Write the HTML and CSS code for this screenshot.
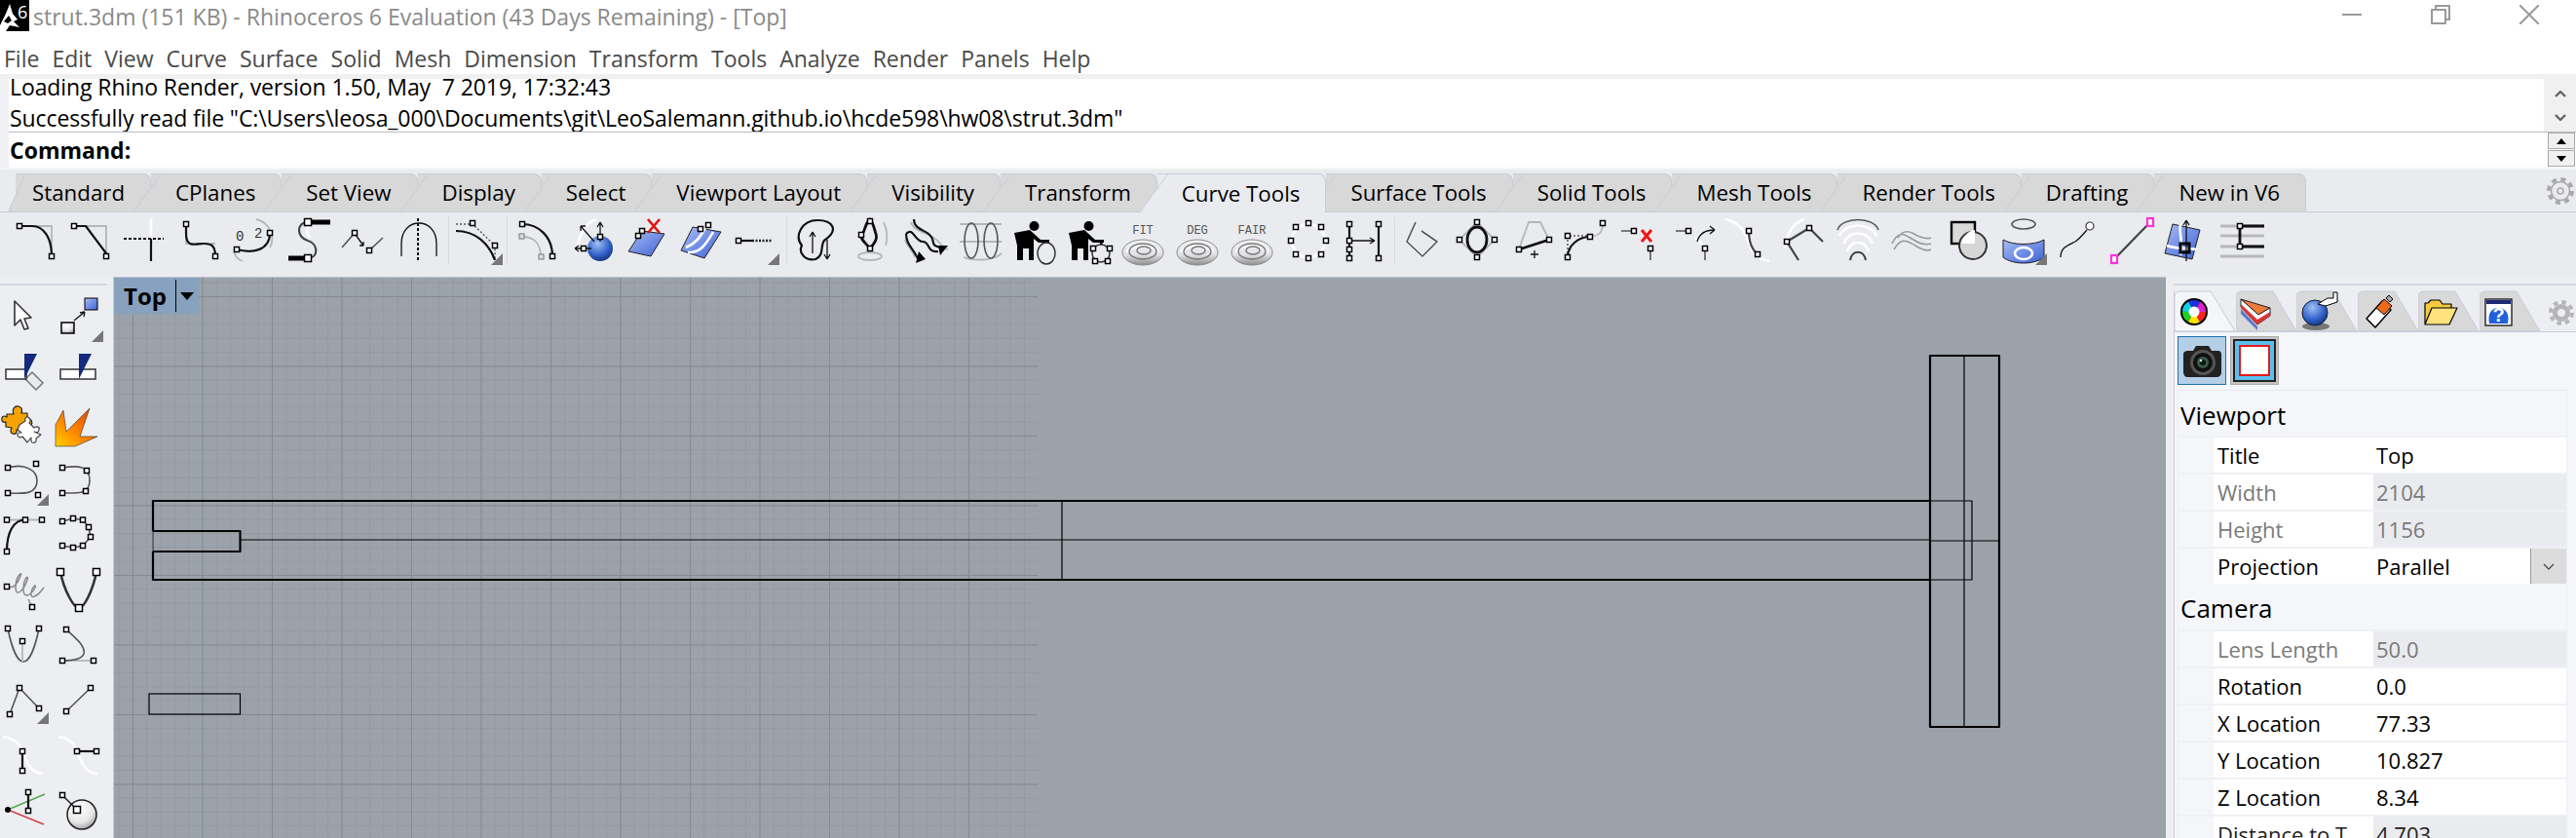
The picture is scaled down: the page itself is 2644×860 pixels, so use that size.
FILE: index.html
```html
<!DOCTYPE html>
<html lang="en">
<head>
<meta charset="utf-8">
<title>strut.3dm - Rhinoceros 6</title>
<link rel="stylesheet" href="styles.css">
</head>
<body>
<svg class="defs" width="0" height="0" aria-hidden="true">
  <defs>
    <rect id="h" class="h" x="-2.5" y="-2.5" width="5" height="5"/>
    <rect id="hb" class="h" x="-3.5" y="-3.5" width="7" height="7"/>
    <rect id="hp" class="hp" x="-3" y="-4" width="6" height="8"/>
    <polygon id="fly" class="fly" points="40,50 52,50 52,38"/>
    <linearGradient id="blue" x1="0" y1="0" x2="1" y2="1"><stop offset="0" stop-color="#a9bdf5"/><stop offset="1" stop-color="#3d62d6"/></linearGradient>
    <radialGradient id="ball" cx=".4" cy=".3" r=".8"><stop offset="0" stop-color="#9fc0f5"/><stop offset=".6" stop-color="#2f5fc8"/><stop offset="1" stop-color="#11276b"/></radialGradient>
    <radialGradient id="pearl" cx=".4" cy=".3" r=".8"><stop offset="0" stop-color="#fff"/><stop offset=".6" stop-color="#e6e6e6"/><stop offset="1" stop-color="#8f8f8f"/></radialGradient>
    <linearGradient id="fire" x1="1" y1="0" x2="0" y2="1"><stop offset="0" stop-color="#d83a00"/><stop offset=".6" stop-color="#ff8a00"/><stop offset="1" stop-color="#ffd000"/></linearGradient>
    <linearGradient id="spiral" x1="0" y1="0" x2="0" y2="1"><stop offset="0" stop-color="#f4f5f7"/><stop offset=".6" stop-color="#e0e1e4"/><stop offset="1" stop-color="#8d8d8d"/></linearGradient>
    <g id="person">
      <circle cx="26.5" cy="10" r="5"/>
      <path d="M6 17L22 14L33 24H42V27H31L26 23V45H21V33H15V45H9V30Z"/>
      <rect x="38" y="25" width="2.5" height="9"/>
    </g>
    <g id="spir">
      <ellipse class="spo" cx="26" cy="37" rx="21" ry="13"/>
      <path class="wl" d="M10 37C10 28 42 28 42 37"/>
      <ellipse class="sg" cx="26" cy="36" rx="14" ry="8"/>
      <ellipse class="sg" cx="27" cy="35" rx="7" ry="4"/>
    </g>
    <g id="gear">
      <circle class="gt" cx="14" cy="14" r="12" />
      <circle class="gi" cx="14" cy="14" r="9.5"/>
      <circle class="gi" cx="14" cy="14" r="3"/>
    </g>
  </defs>
</svg>

<header class="titlebar">
  <svg class="logo" viewBox="0 0 30 32"><rect width="30" height="32" fill="#000"/><path d="M0 26L6 14L10 4L13 14L18 20L14 22L20 28L10 26L6 32H0Z" fill="#fff"/><path d="M4 22L9 16L12 21L8 24Z" fill="#000"/><text class="logo6" x="18" y="19">6</text></svg>
  <span class="title-text">strut.3dm (151 KB) - Rhinoceros 6 Evaluation (43 Days Remaining) - [Top]</span>
  <div class="winctl">
    <svg class="wc" viewBox="0 0 20 20"><path d="M0 10H20"/></svg>
    <svg class="wc" viewBox="0 0 20 20"><path d="M1 5H15V19H1ZM5 5V1H19V15H15"/></svg>
    <svg class="wc" viewBox="0 0 20 20"><path d="M0 0L20 20M20 0L0 20"/></svg>
  </div>
</header>

<nav class="menubar">
  <span>File</span><span>Edit</span><span>View</span><span>Curve</span><span>Surface</span><span>Solid</span><span>Mesh</span><span>Dimension</span><span>Transform</span><span>Tools</span><span>Analyze</span><span>Render</span><span>Panels</span><span>Help</span>
</nav>
<div class="band"></div>

<section class="history">
  <div class="hist-text">
    <div class="hist-line first">Loading Rhino Render, version 1.50, May  7 2019, 17:32:43</div>
    <div class="hist-line second">Successfully read file "C:\Users\leosa_000\Documents\git\LeoSalemann.github.io\hcde598\hw08\strut.3dm"</div>
  </div>
  <div class="hist-scroll">
    <svg class="chev" viewBox="0 0 12 8"><path d="M1 7L6 2L11 7"/></svg>
    <svg class="chev" viewBox="0 0 12 8"><path d="M1 1L6 6L11 1"/></svg>
  </div>
</section>
<section class="command">
  <span class="cmd-label">Command:</span>
  <div class="spin">
    <div class="spin-btn"><svg class="tri" viewBox="0 0 10 6"><path d="M0 6L5 0L10 6Z"/></svg></div>
    <div class="spin-btn"><svg class="tri" viewBox="0 0 10 6"><path d="M0 0L5 6L10 0Z"/></svg></div>
  </div>
</section>

<div class="tabsrow">
  <div class="tab firsttab">Standard</div>
  <div class="tab">CPlanes</div>
  <div class="tab">Set View</div>
  <div class="tab">Display</div>
  <div class="tab">Select</div>
  <div class="tab">Viewport Layout</div>
  <div class="tab">Visibility</div>
  <div class="tab">Transform</div>
  <div class="tab active">Curve Tools</div>
  <div class="tab">Surface Tools</div>
  <div class="tab">Solid Tools</div>
  <div class="tab">Mesh Tools</div>
  <div class="tab">Render Tools</div>
  <div class="tab">Drafting</div>
  <div class="tab">New in V6</div>
  <svg class="rowgear" viewBox="0 0 28 28"><use href="#gear"/></svg>
</div>

<div class="toolbar">
  <svg class="ti" viewBox="0 0 56 54"><path class="lg" d="M11 10H44V41"/><path class="k2" d="M11 10H24C36 10 44 22 44 41"/><use href="#h" x="11" y="10"/><use href="#h" x="44" y="41"/></svg>
  <svg class="ti" viewBox="0 0 56 54"><path class="lg" d="M11 10H44V41"/><path class="k2" d="M11 10H23L44 38V41"/><use href="#h" x="11" y="10"/><use href="#h" x="44" y="41"/></svg>
  <svg class="ti" viewBox="0 0 56 54"><path class="wl" d="M34 2V23"/><path class="k2" d="M34 23V46"/><path class="kd" d="M6 23H47"/></svg>
  <svg class="ti" viewBox="0 0 56 54"><path class="lg" d="M14 18V28H44"/><path class="k2" d="M14 8V18C14 33 24 28 32 28C40 28 44 30 44 41"/><use href="#h" x="14" y="8"/><use href="#h" x="44" y="41"/></svg>
  <svg class="ti" viewBox="0 0 56 54"><path class="lg" d="M30 3C44 6 50 22 44 32M16 46C10 44 8 40 7 36"/><path class="k2" d="M10 34C25 38 44 36 44 17"/><use href="#h" x="10" y="34"/><use href="#h" x="44" y="17"/><text class="ti-t" x="9" y="25">0</text><text class="ti-t" x="28" y="22">2</text></svg>
  <svg class="ti" viewBox="0 0 56 54"><path class="sb" d="M28 6H50M7 43H28"/><path class="g3" d="M27 6C15 6 15 22 27 25C38 28 38 43 27 43"/><path class="wl" d="M29 10C24 14 26 20 30 22"/><use href="#hb" x="27" y="6"/><use href="#hb" x="27" y="43"/></svg>
  <svg class="ti" viewBox="0 0 56 54"><path class="g" d="M6 32L19 17M34 35L48 22"/><path class="k" d="M20 19L28 30M28 30V26M28 30H24"/><use href="#h" x="19" y="17"/><use href="#h" x="34" y="35"/></svg>
  <svg class="ti" viewBox="0 0 56 54"><path class="k" d="M11 41V28C11 0 47 0 47 28V41"/><path class="kd" d="M28 2V45"/></svg>
  <div class="sep sep-a"></div>
  <svg class="ti" viewBox="0 0 56 54"><path class="dots" d="M4 8H21L44 30V44"/><path class="k2" d="M4 15C24 15 38 28 44 45"/><use href="#h" x="21" y="7"/><use href="#h" x="44" y="30"/><use href="#fly"/></svg>
  <div class="sep sep-b"></div>
  <svg class="ti" viewBox="0 0 56 54"><path class="lg" d="M12 21C24 21 31 28 31 41"/><path class="k2" d="M12 8C28 8 43 20 43 41"/><use href="#h" x="12" y="8"/><use href="#h" x="43" y="41"/><rect class="hg" x="9" y="18" width="5" height="5"/><rect class="hg" x="29" y="39" width="5" height="5"/></svg>
  <svg class="ti" viewBox="0 0 56 54"><path class="wl" d="M12 36C14 18 22 6 32 3"/><circle cx="36" cy="33" r="13" fill="url(#ball)"/><path class="k" d="M36 26V6M36 6L33 11M36 6L39 11M30 26L16 10M16 10V15M16 10H21M27 33H10M10 33L14 30M10 33L14 36"/><use href="#h" x="36" y="21"/><use href="#h" x="19" y="33"/></svg>
  <svg class="ti" viewBox="0 0 56 54"><path d="M9 36L23 15L46 18L32 41Z" class="surf"/><path class="red" d="M29 3L41 17M41 3L29 17"/><use href="#h" x="23" y="15"/><use href="#h" x="19" y="20"/></svg>
  <svg class="ti" viewBox="0 0 56 54"><path d="M7 35L19 11L48 16L31 43Z" class="surf"/><path class="wl" d="M12 32C22 28 26 22 32 12M14 37C28 38 34 26 40 16"/><use href="#h" x="35" y="9"/><use href="#h" x="27" y="13"/></svg>
  <svg class="ti" viewBox="0 0 56 54"><path class="k2" d="M10 25H24"/><path class="kd2" d="M24 25H44"/><use href="#h" x="10" y="25"/><use href="#fly"/></svg>
  <div class="sep sep-a"></div>
  <svg class="ti" viewBox="0 0 56 54"><path class="k2" d="M12 30C4 20 12 4 28 4C44 4 50 14 36 24C30 28 36 40 26 44C16 46 8 38 12 30Z"/><path class="k" d="M23 38V16M23 16L20 21M23 16L26 21M38 24V44M38 44L35 39M38 44L41 39"/></svg>
  <svg class="ti" viewBox="0 0 56 54"><ellipse class="lg" cx="26" cy="41" rx="12" ry="4"/><path class="lg" d="M40 6C44 14 44 24 42 30"/><path class="k3" d="M26 3C20 8 22 13 18 18C14 22 22 28 26 33C30 28 34 24 32 18C30 12 30 8 26 3Z"/><use href="#h" x="17" y="19"/><use href="#h" x="26" y="5"/><use href="#h" x="26" y="33"/></svg>
  <svg class="ti" viewBox="0 0 56 54"><path class="lg" d="M12 6C14 14 24 16 32 20C44 26 44 34 50 34M6 24C8 32 14 34 16 42"/><path class="k2" d="M7 18C7 30 16 34 20 46"/><path class="k2" d="M15 3C15 14 28 14 32 20C38 26 30 30 44 32"/><path class="k2" d="M7 18C14 10 16 26 24 26C32 26 28 38 40 36"/><path d="M17 48L20 36L27 44Z"/><path d="M42 40L50 30L40 30Z"/></svg>
  <svg class="ti" viewBox="0 0 56 54"><path class="lg" d="M6 8H49M6 26H49M10 42C20 46 40 46 49 38"/><ellipse class="g" cx="18" cy="25" rx="7" ry="18"/><ellipse class="g" cx="38" cy="25" rx="7" ry="18"/></svg>
  <svg class="ti" viewBox="0 0 56 54"><use href="#person"/><ellipse class="wheel" cx="39" cy="38" rx="9" ry="11"/></svg>
  <svg class="ti" viewBox="0 0 56 54"><use href="#person"/><ellipse class="wheel" cx="39" cy="38" rx="9" ry="9"/><use href="#h" x="31" y="33"/><use href="#h" x="48" y="33"/><use href="#h" x="33" y="46"/><use href="#h" x="46" y="46"/></svg>
  <svg class="ti" viewBox="0 0 56 54"><text class="ti-s" x="26" y="18">FIT</text><use href="#spir"/></svg>
  <svg class="ti" viewBox="0 0 56 54"><text class="ti-s" x="26" y="18">DEG</text><use href="#spir"/></svg>
  <svg class="ti" viewBox="0 0 56 54"><text class="ti-s" x="26" y="18">FAIR</text><use href="#spir"/></svg>
  <svg class="ti" viewBox="0 0 56 54"><circle class="wl" cx="28" cy="25" r="17"/><use href="#h" x="28" y="7"/><use href="#h" x="15" y="11"/><use href="#h" x="41" y="11"/><use href="#h" x="10" y="25"/><use href="#h" x="46" y="25"/><use href="#h" x="15" y="39"/><use href="#h" x="41" y="39"/><use href="#h" x="28" y="43"/></svg>
  <svg class="ti" viewBox="0 0 56 54"><path class="k2" d="M14 8V43M44 8V43"/><path class="k" d="M16 25H40M40 25L35 22M40 25L35 28"/><use href="#h" x="14" y="8"/><use href="#h" x="14" y="25"/><use href="#h" x="14" y="43"/><use href="#h" x="14" y="34"/><use href="#h" x="44" y="8"/><use href="#h" x="44" y="43"/></svg>
  <div class="sep sep-c"></div>
  <svg class="ti" viewBox="0 0 56 54"><path class="wl" d="M12 26L28 41L43 26L27 15"/><path class="g" d="M21 6L12 26L28 41L43 26L27 15"/></svg>
  <svg class="ti" viewBox="0 0 56 54"><path class="lg" d="M28 6L46 24L28 42L10 24Z"/><ellipse class="k3" cx="28" cy="24" rx="10" ry="13"/><use href="#h" x="28" y="6"/><use href="#h" x="46" y="24"/><use href="#h" x="28" y="42"/><use href="#h" x="10" y="24"/></svg>
  <svg class="ti" viewBox="0 0 56 54"><path class="lg" d="M15 34L25 6H37L46 24"/><path class="k3" d="M15 34L46 24"/><use href="#h" x="15" y="34"/><use href="#h" x="46" y="24"/><path class="k" d="M31 35V43M27 39H35"/></svg>
  <svg class="ti" viewBox="0 0 56 54"><path class="dots" d="M9 42V20H32"/><path class="k2" d="M9 42C9 30 20 21 32 21"/><path class="lg" d="M32 21C42 20 45 16 45 7"/><use href="#h" x="9" y="20"/><use href="#h" x="9" y="42"/><use href="#h" x="32" y="21"/><use href="#h" x="45" y="7"/></svg>
  <svg class="ti" viewBox="0 0 56 54"><path class="g" d="M8 15H21M38 33V45"/><path class="red2" d="M29 14L39 26M39 14L29 26"/><use href="#h" x="21" y="15"/><use href="#h" x="38" y="33"/></svg>
  <svg class="ti" viewBox="0 0 56 54"><path class="wl" d="M28 22C34 26 38 30 38 40"/><path class="g" d="M8 15H21M38 33V45"/><path class="k" d="M30 26C32 18 38 14 48 14M48 14L43 10M48 14L43 18"/><use href="#h" x="21" y="15"/><use href="#h" x="38" y="33"/></svg>
  <svg class="ti" viewBox="0 0 56 54"><path class="wl" d="M3 3C16 6 24 14 28 30C32 40 38 44 48 46"/><path class="g3" d="M27 15C27 26 30 34 36 39"/><use href="#h" x="27" y="15"/><use href="#h" x="36" y="39"/></svg>
  <svg class="ti" viewBox="0 0 56 54"><path class="wl" d="M8 32C10 16 18 6 28 3"/><path class="g3" d="M22 45L10 26L33 12L47 26"/><use href="#h" x="10" y="26"/><use href="#h" x="33" y="12"/></svg>
  <svg class="ti" viewBox="0 0 56 54"><path class="g" d="M6 14C10 0 44 0 48 14"/><path class="wl" d="M8 20C14 6 40 6 46 20M12 28C18 14 36 14 42 28M16 36C20 24 34 24 38 36"/><path class="g3" d="M19 45C21 34 33 34 35 45"/></svg>
  <svg class="ti" viewBox="0 0 56 54"><path class="lg2" d="M6 28C14 12 20 20 28 24C34 28 40 30 46 28M8 34C16 20 22 26 30 30C36 34 42 36 46 34M12 22C18 12 26 16 32 20C38 22 42 24 46 22"/></svg>
  <svg class="ti" viewBox="0 0 56 54"><rect class="box" x="11" y="6" width="24" height="22"/><circle cx="33" cy="30" r="14" class="disk"/><path d="M21 28H35V14C28 15 23 20 21 28Z" fill="#fff"/></svg>
  <svg class="ti" viewBox="0 0 56 54"><ellipse class="g" cx="29" cy="8" rx="12" ry="5"/><path d="M8 24C18 30 40 30 50 24V42C40 50 18 50 8 42Z" fill="url(#blue)" stroke="#222" stroke-width="1"/><ellipse class="wl" cx="29" cy="38" rx="9" ry="6"/><use href="#fly" transform="translate(1 0)"/></svg>
  <svg class="ti" viewBox="0 0 56 54"><path class="k" d="M11 42C11 32 18 30 26 26C32 22 34 18 38 14"/><circle class="hr" cx="41" cy="10" r="4"/></svg>
  <svg class="ti" viewBox="0 0 56 54"><path class="g3" d="M10 44L47 6"/><use href="#hp" x="47" y="6"/><use href="#hp" x="10" y="44"/></svg>
  <svg class="ti" viewBox="0 0 56 54"><path class="surf" d="M14 8L42 14L34 44L6 38Z"/><path class="wl" d="M22 8C20 20 26 30 22 40M8 30C18 34 28 32 38 34"/><path class="k" d="M28 32V4M28 4L25 9M28 4L31 9M28 32V46"/><rect class="hb2" x="22" y="28" width="9" height="9"/></svg>
  <svg class="ti" viewBox="0 0 56 54"><path class="lg3" d="M7 10H52M7 20H52M7 31H52M7 41H52"/><path class="k3" d="M27 10V31M27 10H52M27 31H52"/><use href="#h" x="27" y="10"/><use href="#h" x="27" y="31"/></svg>
</div>

<main class="main">
  <aside class="leftbar">
    <svg class="li" viewBox="0 0 56 56"><path class="cursor" d="M19 13L36 30L29 31L33 41L29 42L25 32L19 38Z"/></svg>
    <svg class="li" viewBox="0 0 56 56"><rect x="35" y="10" width="13" height="12" fill="url(#blue)" stroke="#000"/><rect x="11" y="35" width="13" height="11" fill="url(#pearl)" stroke="#000" stroke-width="1.5"/><path class="k" d="M24 33L35 24M35 24L30 25M35 24L34 29"/><use href="#fly" transform="translate(2 5)"/></svg>
    <svg class="li" viewBox="0 0 56 56"><path class="grect" d="M30 37L37 30L48 41L41 48Z"/><rect class="wbar" x="10" y="27" width="21" height="10"/><path d="M29 11H42L29 37Z" fill="#142a7c"/></svg>
    <svg class="li" viewBox="0 0 56 56"><rect class="wbar" x="10" y="27" width="36" height="10"/><path d="M29 11H42L29 37Z" fill="#142a7c"/></svg>
    <svg class="li" viewBox="0 0 56 56"><path class="pz-o" d="M11 17H18C16 12 19 8 23 9C27 10 27 13 26 16H32V22C36 21 38 25 36 28C34 30 32 29 30 28L28 33H21C22 36 20 38 17 37C14 36 15 33 16 31L10 30V25C7 26 5 24 6 21C7 18 9 19 11 20Z"/><path class="pz-w" d="M24 28L30 24C29 20 32 19 34 21C36 23 35 25 34 26L39 31C42 29 45 30 44 33C44 36 41 36 39 35L46 38L41 42C42 45 40 47 37 46C35 45 36 43 36 41L32 46L27 40C24 42 22 40 22 38C22 36 24 36 26 36L22 33Z"/></svg>
    <svg class="li" viewBox="0 0 56 56"><path d="M5 50V28L13 13L16 35L40 11L30 40H48L30 48L25 50Z" fill="url(#fire)" stroke="#333" stroke-width=".6"/></svg>
    <svg class="li" viewBox="0 0 56 56"><path class="g" d="M12 15C30 10 42 18 42 28C42 42 30 42 12 41"/><use href="#h" x="12" y="15"/><use href="#h" x="41" y="11"/><use href="#h" x="12" y="41"/><use href="#h" x="43" y="43"/><use href="#fly" transform="translate(2 4)"/></svg>
    <svg class="li" viewBox="0 0 56 56"><path class="g" d="M12 15C30 12 40 14 40 28C40 42 30 41 12 41"/><use href="#h" x="12" y="15"/><use href="#h" x="37" y="18"/><use href="#h" x="12" y="41"/><use href="#h" x="36" y="39"/></svg>
    <svg class="li" viewBox="0 0 56 56"><path class="lg" d="M11 12.500H47"/><path class="k2" d="M11 45C11 25 18 12.500 30 12.500"/><use href="#h" x="11" y="12.500"/><use href="#h" x="30" y="12.500"/><use href="#h" x="47" y="12.500"/><use href="#h" x="11" y="45"/></svg>
    <svg class="li" viewBox="0 0 56 56"><path class="g" d="M12 14L23 11L33 12.500L39 20L41 30L33 39L23 41L12 39"/><use href="#h" x="12" y="14"/><use href="#h" x="23" y="11"/><use href="#h" x="33" y="12.500"/><use href="#h" x="39" y="20"/><use href="#h" x="41" y="30"/><use href="#h" x="33" y="39"/><use href="#h" x="23" y="41"/><use href="#h" x="12" y="39"/></svg>
    <svg class="li" viewBox="0 0 56 56"><path class="lg4" d="M11 25C18 28 22 22 25 14C28 8 20 14 20 26C20 36 28 30 32 18C34 12 28 16 28 28C28 38 36 34 40 26C42 22 37 24 36 32C35 38 42 36 49 26M37 46L33 38"/><use href="#h" x="11" y="25"/><use href="#h" x="37" y="46"/></svg>
    <svg class="li" viewBox="0 0 56 56"><path class="k2g" d="M10 10C14 30 24 47 29 47C34 47 43 30 47 10"/><use href="#hb" x="10" y="10"/><use href="#hb" x="47" y="10"/><use href="#hb" x="29" y="47"/></svg>
    <svg class="li" viewBox="0 0 56 56"><path class="g" d="M12 12C16 32 22 46 28 46C34 46 40 32 44 12"/><path class="lg" d="M27 25V46"/><use href="#h" x="12" y="12"/><use href="#h" x="44" y="12"/><use href="#h" x="27" y="25"/></svg>
    <svg class="li" viewBox="0 0 56 56"><path class="lg" d="M12 45H44"/><path class="g" d="M16 13C26 22 36 30 34 38C32 44 20 45 12 45"/><use href="#h" x="16" y="13"/><use href="#h" x="12" y="45"/><use href="#h" x="44" y="45"/></svg>
    <svg class="li" viewBox="0 0 56 56"><path class="g" d="M14 44L24 17L44 38"/><use href="#h" x="14" y="44"/><use href="#h" x="24" y="17"/><use href="#h" x="44" y="38"/><use href="#fly" transform="translate(2 4)"/></svg>
    <svg class="li" viewBox="0 0 56 56"><path class="g" d="M16 41L41 17"/><use href="#h" x="16" y="41"/><use href="#h" x="41" y="17"/></svg>
    <svg class="li" viewBox="0 0 56 56"><path class="wl" d="M7 10C24 12 26 22 30 32C34 42 40 48 48 48"/><path class="k2" d="M27 25V45"/><use href="#h" x="27" y="25"/><use href="#h" x="27" y="45"/></svg>
    <svg class="li" viewBox="0 0 56 56"><path class="wl" d="M8 10C24 12 26 22 30 32C34 42 40 48 48 48"/><path class="k2" d="M27 25H47"/><use href="#h" x="27" y="25"/><use href="#h" x="47" y="25"/></svg>
    <svg class="li" viewBox="0 0 56 56"><path class="green" d="M12 29L50 13"/><path class="redl" d="M12 29L49 44"/><circle cx="12" cy="29" r="3"/><path class="k2" d="M33 11V30"/><use href="#h" x="33" y="11"/><use href="#h" x="33" y="30"/></svg>
    <svg class="li" viewBox="0 0 56 56"><circle cx="32" cy="34" r="15" fill="url(#pearl)" stroke="#222" stroke-width="1.500"/><path class="k" d="M12 14L27 29"/><use href="#h" x="12" y="14"/><use href="#hb" x="27" y="29"/></svg>
  </aside>

  <div class="viewport">
    <div class="grid"></div>
    <svg class="geom" viewBox="117 284 2106 576">
      <path class="thick" d="M157 545V514H1981M157 566V595H1981M157 545H246.500V566H157"/>
      <path class="thick" d="M1981 365H2052V746H1981Z"/>
      <path class="thin" d="M246 554H1981M1981 555H2052M2016 365V746M1090 514V595M1981 514H2024V595H1981"/>
      <path class="hair" d="M157 545V566"/>
      <rect class="thin" x="153" y="712" width="93.500" height="21"/>
    </svg>
    <div class="vp-label"><span class="vp-name">Top</span><svg class="vp-drop" viewBox="0 0 14 8"><path d="M0 0H14L7 8Z"/></svg></div>
  </div>

  <aside class="rightpanel">
    <div class="rp-tabs">
      <svg class="rt" viewBox="0 0 62.500 42"><path class="rt-on" d="M0 42V7Q0 1 6 1H37L62 42Z"/><circle cx="20" cy="22" r="14" fill="#000"/><g class="wheelseg"><circle class="s1" cx="20" cy="22" r="8.500"/><circle class="s2" cx="20" cy="22" r="8.500"/><circle class="s3" cx="20" cy="22" r="8.500"/><circle class="s4" cx="20" cy="22" r="8.500"/><circle class="s5" cx="20" cy="22" r="8.500"/><circle class="s6" cx="20" cy="22" r="8.500"/></g><circle cx="20" cy="22" r="5.500" fill="#fff"/></svg>
      <svg class="rt" viewBox="0 0 62.500 42"><path class="rt-off" d="M0 42V7Q0 1 6 1H38L62 42Z"/><path d="M5 9L35 18L23 25Z" fill="#f17a3a" stroke="#222"/><path d="M5 9V17L22 35L35 26V18L23 25Z" fill="#fff" stroke="#222"/><path d="M5 14L22 30L35 22V26L22 35L5 18Z" fill="#d33"/><path d="M5 19L22 37V41L5 24Z" fill="#2a4fc7" opacity=".7"/></svg>
      <svg class="rt" viewBox="0 0 62.500 42"><path class="rt-off" d="M0 42V7Q0 1 6 1H38L62 42Z"/><ellipse cx="20" cy="37" rx="14" ry="4" fill="#777"/><circle cx="19" cy="23" r="13" fill="url(#ball)" stroke="#123"/><path d="M22 14L32 8L38 8V2H42V12L30 16Z" fill="#fff" stroke="#000"/></svg>
      <svg class="rt" viewBox="0 0 62.500 42"><path class="rt-off" d="M0 42V7Q0 1 6 1H38L62 42Z"/><path d="M9 29L25 11L34 20L18 38Z" fill="#fff" stroke="#000" stroke-width="1.500"/><path d="M19 18L27 9L35 16L27 25Z" fill="#ef6a1a" stroke="#000"/><path d="M29 8L32 5L36 9L33 12Z" fill="#aaa" stroke="#000"/></svg>
      <svg class="rt" viewBox="0 0 62.500 42"><path class="rt-off" d="M0 42V7Q0 1 6 1H38L62 42Z"/><path d="M7 34V13H10L13 10H22L25 14H34V18" fill="#f6c93e" stroke="#000" stroke-width="1.200"/><path d="M7 35L14 18H40L32 35Z" fill="#fde27d" stroke="#000" stroke-width="1.200"/></svg>
      <svg class="rt" viewBox="0 0 62.500 42"><path class="rt-off" d="M0 42V7Q0 1 6 1H38L62 42Z"/><rect x="6" y="9" width="27" height="27" fill="#fff" stroke="#000" stroke-width="1.200"/><rect x="7" y="10" width="25" height="4" fill="#1c2a78"/><path d="M10 34C8 24 12 18 19.500 18C27 18 31 24 29 34Z" fill="#2260d8"/><text class="helpq" x="19.500" y="32">?</text></svg>
      <svg class="rgear" viewBox="0 0 28 28"><circle class="gtf" cx="14" cy="14" r="11"/><circle class="gif" cx="14" cy="14" r="6.500"/></svg>
    </div>
    <div class="rp-body">
      <div class="rp-icons">
        <div class="ib ib-on">
          <svg class="cam" viewBox="0 0 40 33"><path d="M1 10C1 7 3 6 6 6H11L14 1H27L30 6H37C39 6 40 8 40 10V28C40 31 38 33 35 33H5C3 33 1 31 1 28Z" fill="#222"/><circle cx="21" cy="18" r="13" fill="#555"/><circle cx="21" cy="18" r="10" fill="#111"/><circle cx="21" cy="18" r="6" fill="#3a5a4a"/><circle cx="21" cy="18" r="3" fill="#0b1510"/><circle cx="19" cy="16" r="1.300" fill="#cfd"/></svg>
        </div>
        <div class="ib ib-off"><div class="frame"><div class="frame-red"></div></div></div>
      </div>
      <div class="ptable">
        <div class="sect">Viewport</div>
        <div class="prow"><span class="pg"></span><span class="pl">Title</span><span class="pv">Top</span></div>
        <div class="prow off"><span class="pg"></span><span class="pl">Width</span><span class="pv">2104</span></div>
        <div class="prow off"><span class="pg"></span><span class="pl">Height</span><span class="pv">1156</span></div>
        <div class="prow"><span class="pg"></span><span class="pl">Projection</span><span class="pv pdrop">Parallel<span class="dd"><svg class="ddc" viewBox="0 0 12 7"><path d="M1 1L6 6L11 1"/></svg></span></span></div>
        <div class="sect">Camera</div>
        <div class="prow off"><span class="pg"></span><span class="pl">Lens Length</span><span class="pv">50.0</span></div>
        <div class="prow"><span class="pg"></span><span class="pl">Rotation</span><span class="pv">0.0</span></div>
        <div class="prow"><span class="pg"></span><span class="pl">X Location</span><span class="pv">77.33</span></div>
        <div class="prow"><span class="pg"></span><span class="pl">Y Location</span><span class="pv">10.827</span></div>
        <div class="prow"><span class="pg"></span><span class="pl">Z Location</span><span class="pv">8.34</span></div>
        <div class="prow off dark"><span class="pg"></span><span class="pl">Distance to T</span><span class="pv">4.703</span></div>
      </div>
    </div>
  </aside>
</main>
</body>
</html>
```

FILE: styles.css
```css
* { box-sizing: border-box; }
html, body { margin: 0; padding: 0; }
body {
  width: 2644px; height: 860px; overflow: hidden; background: #fff;
  font-family: "Open Sans", "Noto Sans", sans-serif; font-size: 23px; color: #000;
}
.defs { position: absolute; }

.titlebar { height: 45px; display: flex; align-items: flex-start; color: #8a8a8a; }
.logo { width: 30px; height: 32px; flex: none; }
.logo6 { fill: #fff; font: 18px "Open Sans", sans-serif; }
.title-text { margin-left: 4px; line-height: 35px; white-space: nowrap; }
.winctl { margin-left: auto; margin-right: 38px; margin-top: 5px; display: flex; gap: 71px; }
.wc { width: 20px; height: 20px; fill: none; stroke: #999; stroke-width: 2; }

.menubar { height: 31px; display: flex; gap: 13px; padding-left: 4px; line-height: 31px; color: #4a4a4a; }
.band { height: 5px; background: #f0f0f0; }

.history { height: 55px; display: flex; padding-left: 9px; background: #f0f1f4; }
.hist-text { flex: 1; background: #fff; padding-left: 1px; overflow: hidden; border-bottom: 1px solid #b9bdc6; min-width: 0; letter-spacing: -.09px; }
.hist-line { white-space: pre; }
.hist-line.first { line-height: 16px; }
.hist-line.second { line-height: 28px; margin-top: 10px; }
.hist-scroll { width: 33px; flex: none; background: #f0f0f0; border-bottom: 1px solid #b9bdc6; display: flex; flex-direction: column; align-items: center; padding-top: 11px; gap: 17px; }
.chev { width: 12px; height: 8px; fill: none; stroke: #666; stroke-width: 2.4; }

.command { height: 36px; display: flex; padding-left: 9px; background: #f0f1f4; }
.cmd-label { flex: 1; background: #fff; padding-left: 1px; font-weight: 700; line-height: 36px; }
.spin { width: 29px; flex: none; background: #fff; display: flex; flex-direction: column; gap: 1px; margin-right: 0; padding-right: 1px; }
.spin-btn { height: 17px; background: #f0f0f0; border: 1px solid #a8a8a8; display: flex; align-items: center; justify-content: center; }
.tri { width: 10px; height: 6px; }

.tabsrow {
  height: 46px; display: flex; align-items: flex-end; padding-left: 16px;
  background: #e9ebef; border-top: 2px solid #f4f5f7; border-bottom: 1px solid #c8ccd8;
  position: relative; font-size: 22.3px;
}
.tab {
  position: relative; height: 39px; padding: 0 26px 0 25px; line-height: 38px; white-space: nowrap;
  background: #d8d8d8; border-top: 1px solid #c8ccd8; border-right: 1px solid #c8ccd8; border-top-right-radius: 8px;
}
.tab::before {
  content: ""; position: absolute; left: -4px; top: -1px; bottom: 0; width: 18px;
  background: inherit; border-left: 1px solid #c8ccd8; border-top: 1px solid #c8ccd8;
  transform: skewX(-36deg);
}
.firsttab { padding-left: 17px; }
.firsttab::before { left: 1px; width: 14px; transform: skewX(-24deg); }
.tab.active { background: #e9ebef; height: 40px; margin-bottom: -1px; z-index: 2; line-height: 39px; }
.rowgear { width: 28px; height: 28px; margin-left: auto; margin-right: 2px; margin-bottom: 7px; flex: none; }
.gt { fill: none; stroke: #a9a9a9; stroke-width: 4; stroke-dasharray: 5 4.42; }
.gi { fill: #e9ebef; stroke: #a9a9a9; stroke-width: 1.6; }

.toolbar { height: 66px; display: flex; align-items: flex-start; padding: 4px 0 0 9px; background: #e9ebef; }
.ti { width: 56px; height: 54px; flex: none; }
.sep { width: 1px; height: 50px; background: #d8dae0; flex: none; }
.sep-a { margin: 0 3px; }
.sep-b { margin: 0 3px 0 0; }
.sep-c { margin: 0 0 0 4px; }

svg path, svg ellipse, svg circle { stroke-linejoin: round; }
.h { fill: #fff; stroke: #000; stroke-width: 1.5; }
.hg { fill: #ddd; stroke: #888; stroke-width: 1.2; }
.hp { fill: #fff; stroke: #ff2fe0; stroke-width: 2.2; }
.fly { fill: #777; }
.k { fill: none; stroke: #111; stroke-width: 1.3; }
.k2 { fill: none; stroke: #111; stroke-width: 2.2; }
.k3 { fill: none; stroke: #111; stroke-width: 2.8; }
.k2g { fill: none; stroke: #333; stroke-width: 2.6; }
.kd { fill: none; stroke: #111; stroke-width: 2; stroke-dasharray: 3 2; }
.kd2 { fill: none; stroke: #222; stroke-width: 2.5; stroke-dasharray: 2 1.5; }
.g { fill: none; stroke: #555; stroke-width: 1.6; }
.sg { fill: none; stroke: #777; stroke-width: 1.4; }
.g3 { fill: none; stroke: #444; stroke-width: 2.2; }
.lg { fill: none; stroke: #b4b6ba; stroke-width: 1.8; }
.lg2 { fill: none; stroke: #999; stroke-width: 1.6; }
.lg3 { fill: none; stroke: #b8b8b8; stroke-width: 3; }
.lg4 { fill: none; stroke: #8a8a8a; stroke-width: 1.5; }
.wl { fill: none; stroke: #fff; stroke-width: 2.6; }
.dots { fill: none; stroke: #555; stroke-width: 1.4; stroke-dasharray: 2 2; }
.sb { fill: none; stroke: #000; stroke-width: 5; }
.surf { fill: url(#blue); stroke: #222; stroke-width: 1; }
.red { fill: none; stroke: #e01010; stroke-width: 2.6; }
.red2 { fill: none; stroke: #f01515; stroke-width: 3; }
.wheel { fill: #e9ebef; stroke: #333; stroke-width: 1.5; }
.spo { fill: url(#spiral); stroke: #8a8a8a; stroke-width: 1; }
.ti-t { font: 14px "Liberation Mono", monospace; fill: #333; }
.ti-s { font: 12px "Liberation Mono", monospace; fill: #555; text-anchor: middle; }
.box { fill: #d9d9d9; stroke: #000; stroke-width: 2.4; }
.disk { fill: #d6d6d6; stroke: #333; stroke-width: 2; }
.hr { fill: #fff; stroke: #333; stroke-width: 1.2; }
.hb2 { fill: none; stroke: #000; stroke-width: 3; }
.cursor { fill: #fff; stroke: #333; stroke-width: 1.6; }
.grect { fill: #e9ebef; stroke: #777; stroke-width: 1.5; }
.wbar { fill: #fff; stroke: #333; stroke-width: 1.5; }
.pz-o { fill: #f5a300; stroke: #222; stroke-width: 1.2; }
.pz-w { fill: #fff; stroke: #444; stroke-width: 1.2; }
.green { fill: none; stroke: #55a84f; stroke-width: 1.6; }
.redl { fill: none; stroke: #d24444; stroke-width: 1.6; }

.main { height: 576px; display: flex; }
.leftbar {
  width: 117px; flex: none; background: #eceef2; border-right: 1px solid #c8ccd8;
  display: grid; grid-template-columns: 52px 56px; grid-auto-rows: 56.2px; align-content: start;
  padding-top: 12px; overflow: hidden; position: relative;
}
.leftbar::before { content: ""; position: absolute; left: 0; right: 6px; top: 7px; border-top: 2px solid #d4d8e4; }
.li { width: 56px; height: 56px; }
.li:nth-child(odd) { margin-left: -4px; }

.viewport { width: 2106px; flex: none; position: relative; background: #9ba2aa; overflow: hidden; border-top: 1px solid #b8c0d0; }
.grid {
  width: 948px; height: 100%;
  background-image:
    linear-gradient(to right, #868a91 1px, transparent 1px),
    linear-gradient(to bottom, #868a91 1px, transparent 1px),
    linear-gradient(to right, #939aa2 1px, transparent 1px),
    linear-gradient(to bottom, #939aa2 1px, transparent 1px);
  background-size: 71.5px 100%, 100% 71.5px, 14.3px 100%, 100% 14.3px;
  background-position: 19px 0, 0 19px, 4.7px 0, 0 4.7px;
}
.geom { position: absolute; left: 0; top: -1px; width: 2106px; height: 576px; }
.thick { fill: none; stroke: #000; stroke-width: 2.2; }
.thin { fill: none; stroke: #000; stroke-width: 1.2; }
.hair { fill: none; stroke: #000; stroke-width: .7; }
.vp-label {
  position: absolute; left: 0; top: 0; width: 87px; height: 37px; background: #87a1bf;
  border-bottom-right-radius: 5px; display: flex; align-items: center; padding-left: 10px;
}
.vp-name { font-weight: 700; font-size: 24px; width: 54px; border-right: 1px solid #000; line-height: 33px; }
.vp-drop { width: 14px; height: 8px; margin-left: 4px; }

.rightpanel { width: 421px; flex: none; background: #eceef2; padding: 7px 0 0 8px; overflow: hidden; position: relative; }
.rightpanel::before { content: ""; position: absolute; left: 8px; right: 0; top: 7px; border-top: 2px solid #d4d8e4; }
.rp-tabs { display: flex; height: 42px; margin-top: 7px; border-left: 1px solid #c8ccd8; }
.rt { width: 62.5px; height: 42px; flex: none; }
.rt-on { fill: #f5f6fa; stroke: #c8ccd8; }
.rt-off { fill: #d8d8d8; stroke: #c8ccd8; }
.wheelseg circle { fill: none; stroke-width: 7; stroke-dasharray: 8.9 44.5; }
.s1 { stroke: #ff2020; } .s2 { stroke: #ffe000; stroke-dashoffset: -8.9; } .s3 { stroke: #20d020; stroke-dashoffset: -17.8; }
.s4 { stroke: #10d0e0; stroke-dashoffset: -26.7; } .s5 { stroke: #2030e0; stroke-dashoffset: -35.6; } .s6 { stroke: #e020d0; stroke-dashoffset: -44.5; }
.helpq { fill: #fff; font: 700 20px "Liberation Sans", sans-serif; text-anchor: middle; }
.rgear { width: 28px; height: 28px; margin: 9px 0 0 8px; flex: none; }
.gtf { fill: none; stroke: #b5b5b5; stroke-width: 4; stroke-dasharray: 4.5 4.14; }
.gif { fill: none; stroke: #b5b5b5; stroke-width: 5; }

.rp-body { height: 520px; background: #f5f6fa; border-left: 1px solid #c8ccd8; border-top: 1px solid #c8ccd8; padding: 4px 10px 0 3px; }
.rp-icons { display: flex; gap: 4px; height: 51px; }
.ib { width: 50px; height: 50px; display: flex; align-items: center; justify-content: center; }
.ib-on { background: #b4cfe6; border: 1px solid #1f6fb0; }
.ib-off { background: #c4c4c4; border: 1px solid #aaa; padding: 2px; }
.cam { width: 40px; height: 33px; }
.frame { width: 100%; height: 100%; border: 2px solid #222; background: #5cc0ee; padding: 4px; display: flex; }
.frame-red { flex: 1; background: #fff; border: 2px solid #e81818; }

.ptable { margin-top: 4px; border-top: 1px solid #e6e7ec; border-left: 1px solid #eceef2; border-right: 1px solid #eceef2; width: 400px; }
.sect { height: 47px; font-size: 26px; line-height: 50px; padding-left: 2px; }
.ptable .prow:nth-child(2) { margin-top: -1px; }
.prow { height: 38px; display: grid; grid-template-columns: 36px 164px 1fr; border-top: 2px solid #f0f1f5; font-size: 22px; line-height: 36px; }
.pg { background: #f5f6fa; }
.pl { background: #fff; padding-left: 4px; white-space: nowrap; }
.pv { background: #fff; padding-left: 3px; white-space: nowrap; }
.off .pl, .off .pv { color: #7a7a7a; }
.off .pv { background: #e9ebef; }
.dark .pl { color: #222; }
.dark .pv { color: #222; }
.pdrop { display: flex; justify-content: space-between; padding-right: 0; }
.dd { width: 37px; height: 36px; background: #dcdcdc; border-left: 1px solid #999; display: flex; align-items: center; justify-content: center; }
.ddc { width: 12px; height: 7px; fill: none; stroke: #444; stroke-width: 1.2; }
```
